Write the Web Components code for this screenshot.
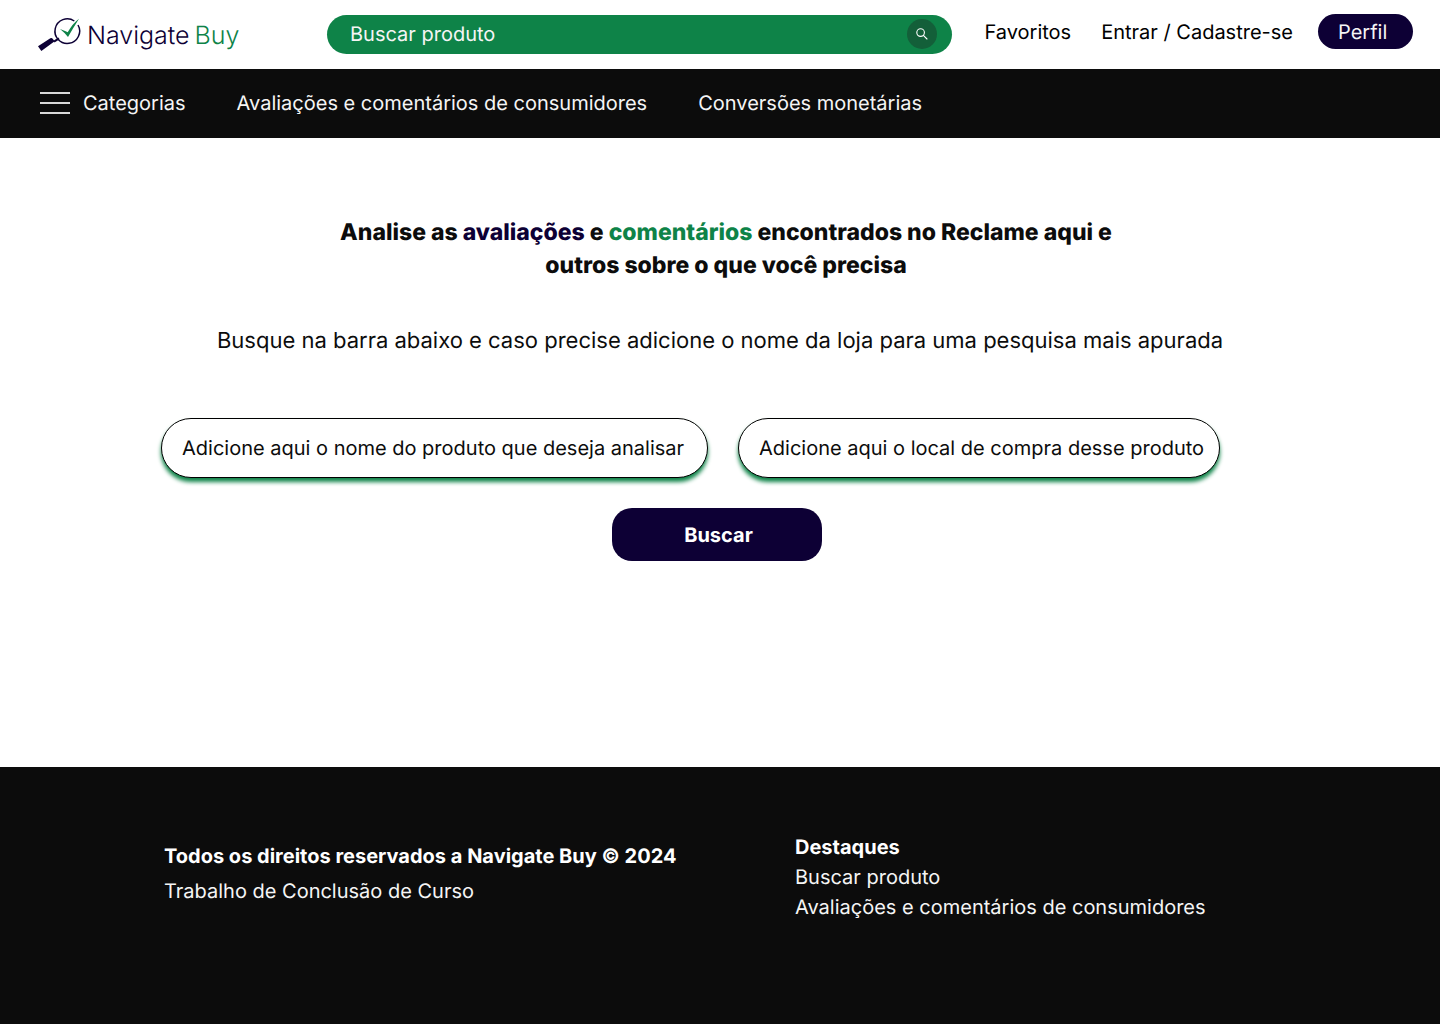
<!DOCTYPE html>
<html lang="pt-BR">
<head>
<meta charset="utf-8">
<meta name="viewport" content="width=device-width, initial-scale=1">
<title>Navigate Buy</title>
<style>
  :root { --navy: #0d0035; --green: #0e8348; --ink: #0c0c0c; }
  body { margin: 0; background: #fff; color: #0c0c0c; font: 400 20px/24px Inter, "Liberation Sans", sans-serif; text-rendering: geometricPrecision; }
</style>
</head>
<body>
<nb-page></nb-page>
<script>
const define = (name, html, connected) => {
  const template = document.createElement('template');
  template.innerHTML = html;
  customElements.define(name, class extends HTMLElement {
    constructor() {
      super();
      this.attachShadow({ mode: 'open' }).append(template.content.cloneNode(true));
    }
    connectedCallback() {
      if (connected) connected(this);
    }
  });
};

define('nb-logo', `
  <style>
    :host { display: block; flex: none; }
    a { display: flex; align-items: center; gap: 7px; color: var(--navy); text-decoration: none; font-size: 25px; line-height: 34px; font-weight: 300; white-space: nowrap; }
    .name { display: flex; gap: 5px; padding-top: 2px; }
    .buy { color: var(--green); }
    svg { display: block; flex: none; overflow: visible; }
  </style>
  <a href="#inicio">
    <svg width="42" height="34" viewBox="54 51 126 102" fill="none" aria-hidden="true">
      <path d="M163 60A37 37 0 1 0 174 72" stroke="var(--navy)" stroke-width="4.5"/>
      <path d="M117 112L102 122" stroke="var(--navy)" stroke-width="6"/>
      <path d="M54 136L91 112Q95 109 98 113L104 121L64 150Z" fill="var(--navy)"/>
      <path d="M120 84L137 91L143 94Q158 67 177 53Q161 78 144 108Q134 95 120 84Z" fill="var(--green)"/>
    </svg>
    <span class="name"><span>Navigate</span> <span class="buy">Buy</span></span>
  </a>`);

define('nb-search', `
  <style>
    :host { display: block; }
    form { display: flex; align-items: center; box-sizing: border-box; height: 39px; padding: 0 15px 2px 23px; border-radius: 20px; background: var(--green); }
    input { flex: 1; min-width: 0; padding: 0; border: 0; outline: 0; background: none; color: #f5f5f5; font: inherit; text-rendering: inherit; }
    input::placeholder { color: #f5f5f5; opacity: 1; }
    button { display: grid; place-items: center; width: 30px; height: 30px; padding: 0; border: 0; border-radius: 50%; background: #135f39; cursor: pointer; }
  </style>
  <form role="search">
    <input type="text" placeholder="Buscar produto" aria-label="Buscar produto">
    <button type="button" aria-label="Buscar">
      <svg width="12" height="12" viewBox="0 0 12 12" fill="none" stroke="#fff" stroke-width="1.1" stroke-linecap="round"><circle cx="4.6" cy="4.6" r="3.8"/><path d="M7.4 7.4L11 11"/></svg>
    </button>
  </form>`);

define('nb-header', `
  <style>
    :host { display: block; }
    header { display: flex; align-items: flex-start; box-sizing: border-box; height: 69px; padding: 14px 27px 0 38px; }
    nb-logo { width: 289px; padding-top: 3px; }
    nb-search { flex: 1; padding-top: 1px; }
    nav { display: flex; align-items: center; gap: 30px; margin-left: 32px; }
    a { color: #000; text-decoration: none; white-space: nowrap; }
    button { box-sizing: border-box; height: 35px; width: 95px; margin-left: -5px; padding: 0 26px 0 20px; border: 0; border-radius: 18px; background: var(--navy); color: #f5f5f5; font: inherit; text-rendering: inherit; text-align: left; }
  </style>
  <header>
    <nb-logo></nb-logo>
    <nb-search></nb-search>
    <nav>
      <a href="#favoritos">Favoritos</a>
      <a href="#entrar">Entrar / Cadastre-se</a>
      <button type="button">Perfil</button>
    </nav>
  </header>`);

define('nb-nav', `
  <style>
    :host { display: block; background: var(--ink); }
    nav { display: flex; align-items: center; gap: 51px; box-sizing: border-box; height: 69px; padding: 0 40px 2px; color: #f5f5f5; }
    a, button { color: inherit; font: inherit; text-rendering: inherit; text-decoration: none; white-space: nowrap; }
    button { display: flex; align-items: center; gap: 13px; padding: 0; border: 0; background: none; }
  </style>
  <nav>
    <button type="button">
      <svg width="30" height="22" viewBox="0 0 30 22" stroke="#d9d9d9" stroke-width="2" aria-hidden="true"><path d="M0 1H30M0 11H30M0 21H30"/></svg>
      Categorias
    </button>
    <a href="#avaliacoes">Avaliações e comentários de consumidores</a>
    <a href="#conversoes">Conversões monetárias</a>
  </nav>`);

define('nb-field', `
  <style>
    :host { display: block; min-width: 0; }
    input { display: block; box-sizing: border-box; width: 100%; height: 60px; padding: 0 14px 0 20px; border: 1px solid #000; border-radius: 30px; outline: 0; background: #fff; color: #0c0c0c; font: inherit; text-rendering: inherit; box-shadow: 0 4px 4px var(--green); }
    input::placeholder { color: #0c0c0c; opacity: 1; }
  </style>
  <input type="text">`, (host) => {
  const input = host.shadowRoot.querySelector('input');
  input.placeholder = host.getAttribute('label');
  input.setAttribute('aria-label', host.getAttribute('label'));
});

define('nb-main', `
  <style>
    :host { display: block; flex: 1; }
    h1 { max-width: 840px; margin: 0 auto; padding: 78px 0 0 12px; font-size: 23px; line-height: 33px; font-weight: 800; text-align: center; }
    .navy { color: var(--navy); }
    .green { color: var(--green); }
    p { margin: 43px 0 0; font-size: 22px; line-height: 32px; text-align: center; }
    form { padding: 61px 220px 60px 161px; }
    .fields { display: flex; gap: 30px; }
    .product { flex: 547 1 0; }
    .place { flex: 482 1 0; }
    .actions { display: flex; justify-content: center; padding: 30px 0 0 52px; }
    button { width: 210px; height: 53px; padding: 0 0 0 4px; border: 0; border-radius: 20px; background: var(--navy); color: #fff; font: inherit; text-rendering: inherit; font-weight: 700; }
  </style>
  <main>
    <h1>Analise as <span class="navy">avaliações</span> e <span class="green">comentários</span> encontrados no Reclame aqui e<br>outros sobre o que você precisa</h1>
    <p>Busque na barra abaixo e caso precise adicione o nome da loja para uma pesquisa mais apurada</p>
    <form>
      <div class="fields">
        <nb-field class="product" label="Adicione aqui o nome do produto que deseja analisar"></nb-field>
        <nb-field class="place" label="Adicione aqui o local de compra desse produto"></nb-field>
      </div>
      <div class="actions"><button type="button">Buscar</button></div>
    </form>
  </main>`);

define('nb-footer', `
  <style>
    :host { display: block; background: var(--ink); color: #f5f5f5; }
    footer { display: flex; box-sizing: border-box; min-height: 257px; padding: 65px 164px 40px; }
    .rights { width: 631px; padding-top: 7px; }
    p, h2, ul { margin: 0; padding: 0; list-style: none; }
    .rights p { line-height: 35px; }
    .bold, h2 { color: #fff; font-weight: 700; }
    h2 { font-size: 20px; line-height: 30px; }
    li { line-height: 30px; }
    a { color: inherit; text-decoration: none; }
  </style>
  <footer>
    <div class="rights">
      <p class="bold">Todos os direitos reservados a Navigate Buy © 2024</p>
      <p>Trabalho de Conclusão de Curso</p>
    </div>
    <section>
      <h2>Destaques</h2>
      <ul>
        <li><a href="#buscar">Buscar produto</a></li>
        <li><a href="#avaliacoes">Avaliações e comentários de consumidores</a></li>
      </ul>
    </section>
  </footer>`);

define('nb-page', `
  <style>:host { display: flex; flex-direction: column; min-height: 100vh; }</style>
  <nb-header></nb-header>
  <nb-nav></nb-nav>
  <nb-main></nb-main>
  <nb-footer></nb-footer>`);
</script>
</body>
</html>
